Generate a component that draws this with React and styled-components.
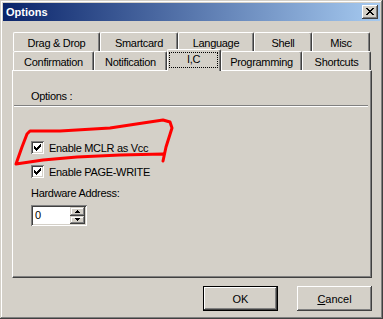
import React from 'react'
import styled, { createGlobalStyle } from 'styled-components'

const GlobalStyle = createGlobalStyle`
  html, body {
    margin: 0;
    padding: 0;
    background: #d4d0c8;
  }
  * {
    box-sizing: border-box;
  }
`

const Window = styled.div`
  position: relative;
  width: 383px;
  height: 319px;
  padding: 3px;
  background: #d4d0c8;
  font-family: 'Liberation Sans', Arial, sans-serif;
  font-size: 11px;
  letter-spacing: -0.3px;
  color: #000;
  box-shadow: inset -1px -1px #404040, inset 1px 1px #d4d0c8,
    inset -2px -2px #808080, inset 2px 2px #ffffff;
  overflow: hidden;
`

const TitleBar = styled.div`
  height: 18px;
  display: flex;
  align-items: center;
  justify-content: space-between;
  padding: 0 2px 0 3px;
  background: linear-gradient(to right, #0a246a, #a6caf0);
`

const Title = styled.span`
  color: #fff;
  font-weight: 700;
  font-size: 11px;
  letter-spacing: 0;
`

const CloseButton = styled.div`
  width: 16px;
  height: 14px;
  display: flex;
  align-items: center;
  justify-content: center;
  background: #d4d0c8;
  box-shadow: inset -1px -1px #404040, inset 1px 1px #ffffff,
    inset -2px -2px #808080, inset 2px 2px #d4d0c8;
  padding: 0 1px 1px 0;
`

const Body = styled.div`
  padding: 11px 8px 0 9px;
`

const TabRow = styled.div`
  display: flex;
  align-items: flex-start;
  height: 19px;
  margin-left: 1px;
`

const Tab = styled.div`
  position: relative;
  flex: none;
  width: ${p => p.$w}px;
  height: ${p => (p.$active ? 22 : 19)}px;
  margin-top: ${p => (p.$active ? -2 : 0)}px;
  z-index: ${p => (p.$active ? 2 : 1)};
  display: flex;
  justify-content: center;
  padding: ${p => (p.$active ? '2px 2px 0 1px' : '4px 0 0')};
  background: #d4d0c8;
  border-top: 1px solid #ffffff;
  border-left: 1px solid #ffffff;
  border-right: 1px solid #404040;
  border-radius: 2px 2px 0 0;
  box-shadow: inset -1px 0 #808080;
  line-height: 13px;
  white-space: nowrap;
`

const FocusLabel = styled.span`
  display: block;
  width: 100%;
  height: 16px;
  border: 1px dotted #000;
  text-align: center;
  line-height: 13px;
`

const Panel = styled.div`
  height: 208px;
  border-top: 1px solid #ffffff;
  border-left: 1px solid #ffffff;
  border-right: 1px solid #404040;
  border-bottom: 1px solid #404040;
  box-shadow: inset -1px -1px #808080;
`

const GroupHeader = styled.div`
  margin-top: 19px;
  padding-left: 18px;
  line-height: 13px;
`

const Separator = styled.div`
  height: 2px;
  margin: 2px 3px 0 1px;
  border-top: 1px solid #808080;
  border-bottom: 1px solid #ffffff;
`

const OptionList = styled.div`
  display: flex;
  flex-direction: column;
  align-items: flex-start;
  padding: 34px 0 0 18px;
`

const CheckRow = styled.label`
  display: flex;
  align-items: center;
  gap: 5px;
  height: 13px;
  margin-bottom: 11px;
  line-height: 12px;
`

const CheckBox = styled.span`
  flex: none;
  width: 13px;
  height: 13px;
  display: flex;
  align-items: center;
  justify-content: center;
  background: #fff;
  box-shadow: inset 1px 1px #808080, inset -1px -1px #ffffff,
    inset 2px 2px #404040, inset -2px -2px #d4d0c8;
`

const FieldLabel = styled.div`
  margin-top: -2px;
  line-height: 13px;
`

const Spinner = styled.div`
  display: flex;
  width: 56px;
  height: 21px;
  margin-top: 5px;
  padding: 2px;
  background: #fff;
  box-shadow: inset 1px 1px #808080, inset -1px -1px #ffffff,
    inset 2px 2px #404040, inset -2px -2px #d4d0c8;
`

const SpinValue = styled.span`
  flex: 1;
  padding-left: 2px;
  line-height: 16px;
`

const SpinButtons = styled.div`
  display: flex;
  flex-direction: column;
  width: 15px;
`

const SpinButton = styled.div`
  flex: 1;
  display: flex;
  align-items: center;
  justify-content: center;
  background: #d4d0c8;
  box-shadow: inset -1px -1px #404040, inset 1px 1px #d4d0c8,
    inset -2px -2px #808080, inset 2px 2px #ffffff;
`

const ButtonRow = styled.div`
  display: flex;
  justify-content: flex-end;
  gap: 19px;
  margin-top: 8px;
`

const Button = styled.div`
  width: 75px;
  height: 25px;
  display: flex;
  align-items: center;
  justify-content: center;
  background: #d4d0c8;
  border: ${p => (p.$default ? '1px solid #000' : 'none')};
  box-shadow: ${p => (p.$default
    ? 'inset -1px -1px #404040, inset 1px 1px #ffffff, inset -2px -2px #808080'
    : 'inset -1px -1px #404040, inset 1px 1px #ffffff, inset -2px -2px #808080, inset 2px 2px #d4d0c8')};
  letter-spacing: 0;
`

const Scribble = styled.svg`
  position: absolute;
  left: 0;
  top: 0;
  pointer-events: none;
`

const pixels = (rows, color) => rows.flatMap((row, y) =>
  row.split('').map((c, x) => (c === 'X'
    ? <rect key={`${x}-${y}`} x={x} y={y} width="1" height="1" fill={color} />
    : null)))

const CloseGlyph = () => (
  <svg width="8" height="7" shapeRendering="crispEdges">
    {pixels([
      'XX....XX',
      '.XX..XX.',
      '..XXXX..',
      '...XX...',
      '..XXXX..',
      '.XX..XX.',
      'XX....XX'
    ], '#000')}
  </svg>
)

const CheckGlyph = () => (
  <svg width="7" height="7" shapeRendering="crispEdges">
    {pixels([
      '......X',
      '.....XX',
      'X...XXX',
      'XX.XXX.',
      'XXXXX..',
      '.XXX...',
      '..X....'
    ], '#000')}
  </svg>
)

const Arrow = ({ up }) => (
  <svg width="5" height="3" shapeRendering="crispEdges">
    <polygon points={up ? '2.5,0 5,3 0,3' : '0,0 5,0 2.5,3'} fill="#000" />
  </svg>
)

const backTabs = [
  { label: 'Drag & Drop', w: 87 },
  { label: 'Smartcard', w: 78 },
  { label: 'Language', w: 76 },
  { label: 'Shell', w: 58 },
  { label: 'Misc', w: 58 }
]

const frontTabs = [
  { label: 'Confirmation', w: 81 },
  { label: 'Notification', w: 73 },
  { label: 'I,C', w: 54, active: true },
  { label: 'Programming', w: 81 },
  { label: 'Shortcuts', w: 69 }
]

const Check = ({ children }) => (
  <CheckRow>
    <CheckBox><CheckGlyph /></CheckBox>
    {children}
  </CheckRow>
)

const App = () => (
  <Window>
    <GlobalStyle />
    <TitleBar>
      <Title>Options</Title>
      <CloseButton><CloseGlyph /></CloseButton>
    </TitleBar>
    <Body>
      <TabRow>
        {backTabs.map(t => <Tab key={t.label} $w={t.w}>{t.label}</Tab>)}
      </TabRow>
      <TabRow>
        {frontTabs.map(t => (
          <Tab key={t.label} $w={t.w} $active={t.active}>
            {t.active ? <FocusLabel>{t.label}</FocusLabel> : t.label}
          </Tab>
        ))}
      </TabRow>
      <Panel>
        <GroupHeader>Options :</GroupHeader>
        <Separator />
        <OptionList>
          <Check>Enable MCLR as Vcc</Check>
          <Check>Enable PAGE-WRITE</Check>
          <FieldLabel>Hardware Address:</FieldLabel>
          <Spinner>
            <SpinValue>0</SpinValue>
            <SpinButtons>
              <SpinButton><Arrow up /></SpinButton>
              <SpinButton><Arrow /></SpinButton>
            </SpinButtons>
          </Spinner>
        </OptionList>
      </Panel>
      <ButtonRow>
        <Button $default>OK</Button>
        <Button><span><u>C</u>ancel</span></Button>
      </ButtonRow>
    </Body>
    <Scribble width="383" height="319">
      <path
        d="M163,161 L166,147 L172,128 L170,122 L163,120 L143,123 L110,128 L60,131 L30,131 L27,134 L22,147 L16,164 L43,160 L77,157 L120,155 L163,154"
        fill="none"
        stroke="#ff0000"
        strokeWidth="3"
        strokeLinejoin="round"
        strokeLinecap="round"
      />
    </Scribble>
  </Window>
)

export default App
